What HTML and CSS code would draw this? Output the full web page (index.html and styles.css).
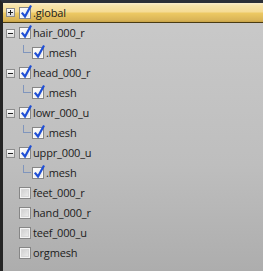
FILE: index.html
```html
<!DOCTYPE html>
<html>
<head>
<meta charset="utf-8">
<link rel="stylesheet" href="styles.css">
</head>
<body>
<div class="panel">
  <div class="tree">
    <div class="row selected">
      <span class="toggle plus"></span>
      <span class="cb checked"><svg viewBox="0 0 12 14" class="tick"><path d="M2.5 8.5 L5 11.5 L10.5 1.5" /></svg></span>
      <span class="label">.global</span>
    </div>
    <div class="row">
      <span class="toggle minus"></span>
      <span class="cb checked"><svg viewBox="0 0 12 14" class="tick"><path d="M2.5 8.5 L5 11.5 L10.5 1.5" /></svg></span>
      <span class="label">hair_000_r</span>
    </div>
    <div class="row child">
      <span class="branch"></span>
      <span class="cb checked"><svg viewBox="0 0 12 14" class="tick"><path d="M2.5 8.5 L5 11.5 L10.5 1.5" /></svg></span>
      <span class="label">.mesh</span>
    </div>
    <div class="row">
      <span class="toggle minus"></span>
      <span class="cb checked"><svg viewBox="0 0 12 14" class="tick"><path d="M2.5 8.5 L5 11.5 L10.5 1.5" /></svg></span>
      <span class="label">head_000_r</span>
    </div>
    <div class="row child">
      <span class="branch"></span>
      <span class="cb checked"><svg viewBox="0 0 12 14" class="tick"><path d="M2.5 8.5 L5 11.5 L10.5 1.5" /></svg></span>
      <span class="label">.mesh</span>
    </div>
    <div class="row">
      <span class="toggle minus"></span>
      <span class="cb checked"><svg viewBox="0 0 12 14" class="tick"><path d="M2.5 8.5 L5 11.5 L10.5 1.5" /></svg></span>
      <span class="label">lowr_000_u</span>
    </div>
    <div class="row child">
      <span class="branch"></span>
      <span class="cb checked"><svg viewBox="0 0 12 14" class="tick"><path d="M2.5 8.5 L5 11.5 L10.5 1.5" /></svg></span>
      <span class="label">.mesh</span>
    </div>
    <div class="row">
      <span class="toggle minus"></span>
      <span class="cb checked"><svg viewBox="0 0 12 14" class="tick"><path d="M2.5 8.5 L5 11.5 L10.5 1.5" /></svg></span>
      <span class="label">uppr_000_u</span>
    </div>
    <div class="row child">
      <span class="branch"></span>
      <span class="cb checked"><svg viewBox="0 0 12 14" class="tick"><path d="M2.5 8.5 L5 11.5 L10.5 1.5" /></svg></span>
      <span class="label">.mesh</span>
    </div>
    <div class="row">
      <span class="toggle none"></span>
      <span class="cb"></span>
      <span class="label">feet_000_r</span>
    </div>
    <div class="row">
      <span class="toggle none"></span>
      <span class="cb"></span>
      <span class="label">hand_000_r</span>
    </div>
    <div class="row">
      <span class="toggle none"></span>
      <span class="cb"></span>
      <span class="label">teef_000_u</span>
    </div>
    <div class="row">
      <span class="toggle none"></span>
      <span class="cb"></span>
      <span class="label">orgmesh</span>
    </div>
  </div>
</div>
</body>
</html>
```
FILE: styles.css
```css
html, body {
  margin: 0;
  padding: 0;
  width: 263px;
  height: 271px;
  overflow: hidden;
  background: #232323;
}
.panel {
  width: 263px;
  height: 271px;
  box-sizing: border-box;
  border-left: 3px solid #242424;
  border-top: 3px solid #2c3038;
  background: linear-gradient(to bottom, #cacaca 0%, #bebebe 60%, #adadad 100%);
  font-family: "Open Sans", "Liberation Sans", sans-serif;
  font-size: 11px;
  color: #1c1c1c;
}
.tree {
  display: flex;
  flex-direction: column;
}
.row {
  height: 20px;
  display: flex;
  align-items: center;
  box-sizing: border-box;
}
.row.selected {
  background: linear-gradient(to bottom, #fbeecb 0%, #f7e3a8 15%, #f5dc96 45%, #ecc862 55%, #d9b457 90%, #c7a246 100%);
  border-bottom: 1px solid #4a3b12;
}
.toggle {
  width: 9px;
  height: 9px;
  margin-left: 3px;
  margin-right: 4px;
  box-sizing: border-box;
  border: 1px solid #8c8c8c;
  background: linear-gradient(to bottom, #ffffff, #d8d8d8);
  position: relative;
  flex: none;
}
.toggle.none {
  border: none;
  background: none;
}
.toggle.minus::after,
.toggle.plus::after {
  content: "";
  position: absolute;
  left: 1px;
  top: 3px;
  width: 5px;
  height: 1px;
  background: #222;
}
.toggle.plus::before {
  content: "";
  position: absolute;
  left: 3px;
  top: 1px;
  width: 1px;
  height: 5px;
  background: #222;
}
.cb {
  width: 12px;
  height: 12px;
  box-sizing: border-box;
  border: 1px solid #868686;
  background: linear-gradient(135deg, #c9c9c9 0%, #f2f2f2 100%);
  box-shadow: inset 0 0 0 1px #f4f4f4, inset 0 0 0 2px #d8d8d8;
  position: relative;
  flex: none;
}
.cb.checked {
  background: linear-gradient(135deg, #ffffff 0%, #e8e8e8 100%);
  box-shadow: inset 0 0 0 1px #fafafa;
}
.tick {
  position: absolute;
  left: 0px;
  top: -3px;
  width: 12px;
  height: 14px;
  fill: none;
  stroke: #1f4fd6;
  stroke-width: 2.2;
  stroke-linecap: square;
}
.label {
  margin-left: 2px;
  white-space: nowrap;
  line-height: 20px;
  letter-spacing: -0.15px;
}
.row.child {
  padding-left: 20px;
}
.branch {
  align-self: flex-start;
  width: 8px;
  height: 8px;
  margin-top: 2px;
  box-sizing: border-box;
  border-left: 1px solid #7f95bd;
  border-bottom: 1px solid #7f95bd;
  margin-right: 1px;
  flex: none;
}
```
